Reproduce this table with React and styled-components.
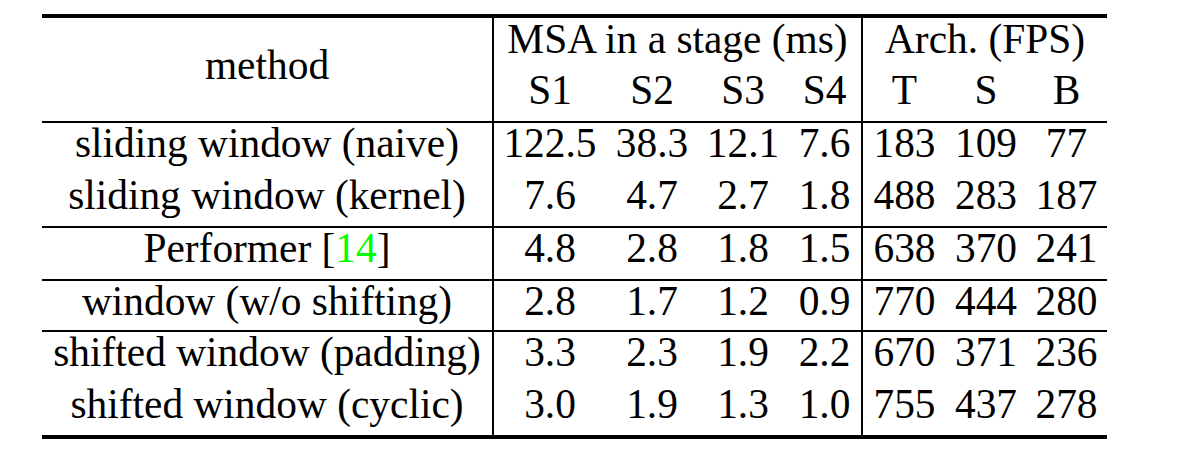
import React from "react";
import styled, { createGlobalStyle } from "styled-components";

const Global = createGlobalStyle`
  html, body { margin: 0; padding: 0; background: #fff; }
  body { font-family: "Liberation Serif", "Times New Roman", serif; color: #000; }
`;

const Page = styled.div`
  display: flex;
  padding: 14px 0 0 42px;
  width: 1179px;
  height: 456px;
  box-sizing: border-box;
`;

const Table = styled.table`
  border-collapse: separate;
  border-spacing: 0;
  table-layout: fixed;
  width: 1065px;
  height: max-content;
  border-top: 4px solid #000;
  border-bottom: 4px solid #000;
  font-family: "Liberation Serif", "Times New Roman", serif;
  font-size: 41.4px;
  line-height: 41.4px;
  color: #000;
`;

const Col = styled.col`
  width: ${(p) => p.$w}px;
`;

const Row = styled.tr`
  height: ${(p) => p.$h}px;
`;

const Cell = styled.td`
  box-sizing: border-box;
  padding: ${(p) => p.$pt || 0}px 0 0 0;
  text-align: center;
  vertical-align: top;
  white-space: nowrap;
  font-family: "Liberation Serif", serif;
  border-top: ${(p) => (p.$rule ? "2px solid #000" : "none")};
  border-right: ${(p) => (p.$sep ? "2px solid #000" : "none")};
`;

const Ref = styled.span`
  color: #00ff00;
`;

const widths = [452, 112, 92, 90, 75, 83, 80, 81];

const groups = [
  [
    { h: 54, cells: ["sliding window (naive)", "122.5", "38.3", "12.1", "7.6", "183", "109", "77"] },
    { h: 51, cells: ["sliding window (kernel)", "7.6", "4.7", "2.7", "1.8", "488", "283", "187"] },
  ],
  [
    {
      h: 53,
      cells: [
        <>
          Performer [<Ref>14</Ref>]
        </>,
        "4.8", "2.8", "1.8", "1.5", "638", "370", "241",
      ],
    },
  ],
  [{ h: 51, cells: ["window (w/o shifting)", "2.8", "1.7", "1.2", "0.9", "770", "444", "280"] }],
  [
    { h: 54, cells: ["shifted window (padding)", "3.3", "2.3", "1.9", "2.2", "670", "371", "236"] },
    { h: 51, cells: ["shifted window (cyclic)", "3.0", "1.9", "1.3", "1.0", "755", "437", "278"] },
  ],
];

export default function App() {
  return (
    <>
      <Global />
      <Page>
        <Table>
          <colgroup>
            {widths.map((w, i) => (
              <Col key={i} $w={w} />
            ))}
          </colgroup>
          <thead>
            <Row $h={52}>
              <Cell rowSpan={2} $sep $pt={27}>
                method
              </Cell>
              <Cell colSpan={4} $sep $pt={1}>
                MSA in a stage (ms)
              </Cell>
              <Cell colSpan={3} $pt={1}>
                Arch. (FPS)
              </Cell>
            </Row>
            <Row $h={51}>
              <Cell>S1</Cell>
              <Cell>S2</Cell>
              <Cell>S3</Cell>
              <Cell $sep>S4</Cell>
              <Cell>T</Cell>
              <Cell>S</Cell>
              <Cell>B</Cell>
            </Row>
          </thead>
          <tbody>
            {groups.map((g, gi) =>
              g.map((r, ri) => (
                <Row key={`${gi}-${ri}`} $h={r.h}>
                  {r.cells.map((c, ci) => (
                    <Cell key={ci} $rule={ri === 0} $sep={ci === 0 || ci === 4}>
                      {c}
                    </Cell>
                  ))}
                </Row>
              ))
            )}
          </tbody>
        </Table>
      </Page>
    </>
  );
}
